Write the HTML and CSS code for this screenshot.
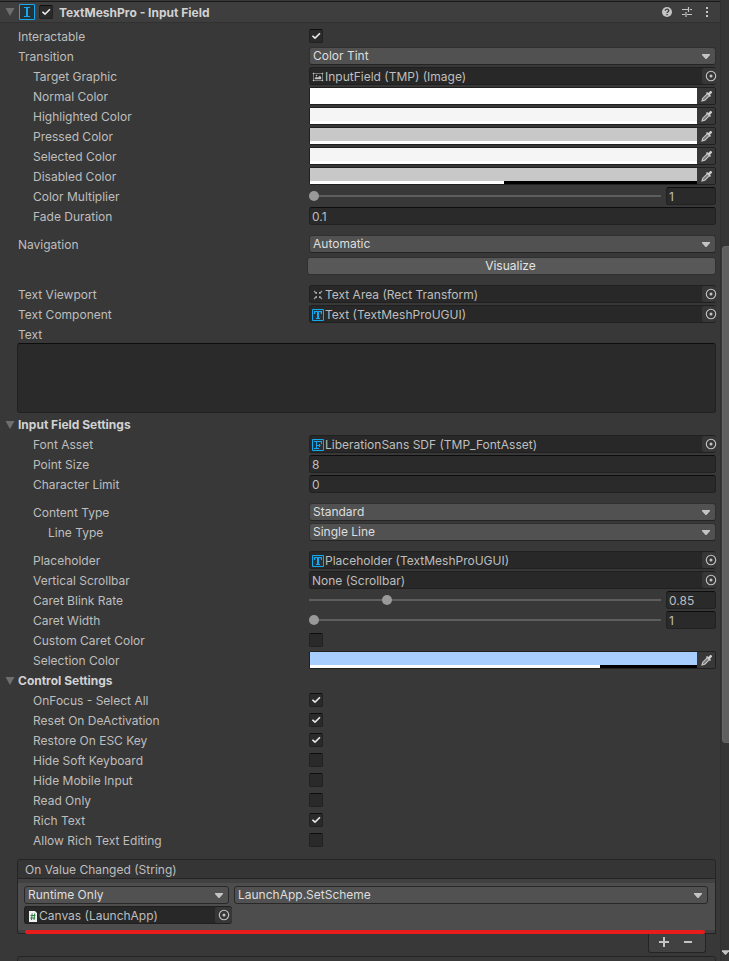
FILE: index.html
```html
<!DOCTYPE html>
<html lang="en">
<head>
<meta charset="utf-8">
<title>Inspector</title>
<link rel="stylesheet" href="styles.css">
</head>
<body>
<svg class="defs" aria-hidden="true">
  <symbol id="fold" viewBox="0 0 10 8"><path d="M0.5 0h9L5 8z" fill="#6e6e6e"/></symbol>
  <symbol id="arrow" viewBox="0 0 8 5"><path d="M0 0h8v1L4.500 5h-1L0 1z" fill="#c4c4c4"/></symbol>
  <symbol id="target" viewBox="0 0 12 12"><circle cx="6" cy="6" r="4.700" fill="none" stroke="#c4c4c4" stroke-width="1.100"/><circle cx="6" cy="6" r="1.500" fill="#c4c4c4"/></symbol>
  <symbol id="dropper" viewBox="0 0 12 12"><path d="M6.200 3.800L1.800 8.200 1 11l2.800-.8 4.400-4.400" fill="#777" stroke="#c4c4c4" stroke-width="1.200"/><path d="M5 3l1-1 1.300 1L9 1.200C10 .2 11.800 2 10.800 3L9 4.700 10 6 9 7z" fill="#d0d0d0"/></symbol>
  <symbol id="tmp-t" viewBox="0 0 12 12"><path d="M.5.5h11v11H.5z" fill="#263238" stroke="#15a8ec"/><path d="M2 2h8v3H9L8.500 3H7v6h1v1H4V9h1V3H3.500L3 5H2z" fill="#15a8ec"/></symbol>
  <symbol id="tmp-f" viewBox="0 0 12 12"><path d="M.5.5h11v11H.5z" fill="#263238" stroke="#15a8ec"/><path d="M2 2.500h8M9.500 2v3M4.500 2.500v7M2 9.500h5M4.500 6.500h4M7.500 5v3" fill="none" stroke="#15a8ec"/></symbol>
  <symbol id="image" viewBox="0 0 12 10"><path d="M1.500 1.500h9v7h-9z" fill="none" stroke="#777"/><path d="M1 1h1v1H1zM10 1h1v1h-1zM1 8h1v1H1zM10 8h1v1h-1zM3 7V6l1.500-1L6 6l1.500-2L9 5v2zM4 3h1v1H4z" fill="#c4c4c4" stroke="#c4c4c4" stroke-width=".4"/></symbol>
  <symbol id="rect" viewBox="0 0 12 12"><path d="M2 2l2.500 2.500M10 2L7.500 4.500M2 10l2.500-2.500M10 10L7.500 7.500" stroke="#999" stroke-width="1.200"/><path d="M3 4.500h2V2.800zM7 2.800v1.700h2zM3 7.500h2v1.700zM7 9.200V7.500h2z" fill="#c4c4c4"/></symbol>
</svg>
<div class="window">
<main class="inspector">
  <header class="titlebar">
    <svg class="fold"><use href="#fold"/></svg>
    <svg class="component-icon" viewBox="0 0 16 16"><path d="M.5.5h15v15H.5z" fill="#263238" stroke="#15a8ec"/><path d="M5 3h6v1H9v8h2v1H5v-1h2V4H5z" fill="#15a8ec"/></svg>
    <input type="checkbox" id="enabled" aria-label="Enabled" checked>
    <h1><label for="enabled">TextMeshPro - Input Field</label></h1>
    <button class="tool" aria-label="Help"><svg viewBox="0 0 12 12"><circle cx="6" cy="6" r="5" fill="#c4c4c4"/><path d="M4.200 4.800c0-2.300 3.600-2.300 3.600-.2 0 1.200-1.800 1.200-1.800 2.500" fill="none" stroke="#3e3e3e" stroke-width="1.300"/><path d="M5.300 8h1.400v1.300H5.300z" fill="#3e3e3e"/></svg></button>
    <button class="tool" aria-label="Presets"><svg viewBox="0 0 12 12"><path d="M1 3.500h6M9 3.500h2M1 8.500h3M6 8.500h5M7.500 1v5M5 6v5" fill="none" stroke="#c4c4c4" stroke-width="1.200"/></svg></button>
    <button class="tool" aria-label="More"><svg viewBox="0 0 12 12"><path d="M5 1h2v2H5zM5 5h2v2H5zM5 9h2v2H5z" fill="#c4c4c4"/></svg></button>
  </header>

  <form class="body">
    <div class="row"><label for="interactable">Interactable</label><input type="checkbox" id="interactable" checked></div>
    <div class="row"><label for="transition">Transition</label><div class="dropdown"><select id="transition"><option>Color Tint</option></select><svg><use href="#arrow"/></svg></div></div>
    <div class="row in1"><label for="graphic">Target Graphic</label><div class="object"><svg class="image"><use href="#image"/></svg><span>InputField (TMP) (Image)</span><button type="button" id="graphic"><svg><use href="#target"/></svg></button></div></div>
    <div class="row in1"><label for="c1">Normal Color</label><div class="color"><div class="swatch"><input type="color" id="c1" value="#ffffff"><div class="alpha"><div style="width:100%"></div></div></div><button type="button" aria-label="Pick"><svg><use href="#dropper"/></svg></button></div></div>
    <div class="row in1"><label for="c2">Highlighted Color</label><div class="color"><div class="swatch"><input type="color" id="c2" value="#f5f5f5"><div class="alpha"><div style="width:100%"></div></div></div><button type="button" aria-label="Pick"><svg><use href="#dropper"/></svg></button></div></div>
    <div class="row in1"><label for="c3">Pressed Color</label><div class="color"><div class="swatch"><input type="color" id="c3" value="#c8c8c8"><div class="alpha"><div style="width:100%"></div></div></div><button type="button" aria-label="Pick"><svg><use href="#dropper"/></svg></button></div></div>
    <div class="row in1"><label for="c4">Selected Color</label><div class="color"><div class="swatch"><input type="color" id="c4" value="#f5f5f5"><div class="alpha"><div style="width:100%"></div></div></div><button type="button" aria-label="Pick"><svg><use href="#dropper"/></svg></button></div></div>
    <div class="row in1"><label for="c5">Disabled Color</label><div class="color"><div class="swatch"><input type="color" id="c5" value="#c8c8c8"><div class="alpha"><div style="width:50%"></div></div></div><button type="button" aria-label="Pick"><svg><use href="#dropper"/></svg></button></div></div>
    <div class="row in1"><label for="mult">Color Multiplier</label><div class="slider"><input type="range" id="mult" min="1" max="5" step="0.01" value="1"><input type="text" aria-label="Color Multiplier value" value="1"></div></div>
    <div class="row in1"><label for="fade">Fade Duration</label><input type="text" id="fade" value="0.1"></div>

    <div class="row gap"><label for="nav">Navigation</label><div class="dropdown"><select id="nav"><option>Automatic</option></select><svg><use href="#arrow"/></svg></div></div>
    <div class="row visualize"><button type="button">Visualize</button></div>

    <div class="row gap"><label for="viewport">Text Viewport</label><div class="object"><svg><use href="#rect"/></svg><span>Text Area (Rect Transform)</span><button type="button" id="viewport"><svg><use href="#target"/></svg></button></div></div>
    <div class="row"><label for="component">Text Component</label><div class="object"><svg><use href="#tmp-t"/></svg><span>Text (TextMeshProUGUI)</span><button type="button" id="component"><svg><use href="#target"/></svg></button></div></div>
    <div class="row"><label for="text">Text</label></div>
    <textarea id="text"></textarea>

    <h2><svg class="fold"><use href="#fold"/></svg>Input Field Settings</h2>
    <div class="row in1"><label for="font">Font Asset</label><div class="object"><svg><use href="#tmp-f"/></svg><span>LiberationSans SDF (TMP_FontAsset)</span><button type="button" id="font"><svg><use href="#target"/></svg></button></div></div>
    <div class="row in1"><label for="size">Point Size</label><input type="text" id="size" value="8"></div>
    <div class="row in1"><label for="limit">Character Limit</label><input type="text" id="limit" value="0"></div>

    <div class="row in1 gap"><label for="content">Content Type</label><div class="dropdown"><select id="content"><option>Standard</option></select><svg><use href="#arrow"/></svg></div></div>
    <div class="row in2"><label for="line">Line Type</label><div class="dropdown"><select id="line"><option>Single Line</option></select><svg><use href="#arrow"/></svg></div></div>

    <div class="row in1 gap"><label for="placeholder">Placeholder</label><div class="object"><svg><use href="#tmp-t"/></svg><span>Placeholder (TextMeshProUGUI)</span><button type="button" id="placeholder"><svg><use href="#target"/></svg></button></div></div>
    <div class="row in1"><label for="scrollbar">Vertical Scrollbar</label><div class="object"><span>None (Scrollbar)</span><button type="button" id="scrollbar"><svg><use href="#target"/></svg></button></div></div>
    <div class="row in1"><label for="blink">Caret Blink Rate</label><div class="slider"><input type="range" id="blink" min="0" max="4" step="0.01" value="0.85"><input type="text" aria-label="Caret Blink Rate value" value="0.85"></div></div>
    <div class="row in1"><label for="caret">Caret Width</label><div class="slider"><input type="range" id="caret" min="1" max="5" value="1"><input type="text" aria-label="Caret Width value" value="1"></div></div>
    <div class="row in1"><label for="custom">Custom Caret Color</label><input type="checkbox" id="custom"></div>
    <div class="row in1"><label for="c6">Selection Color</label><div class="color"><div class="swatch"><input type="color" id="c6" value="#a8ceff"><div class="alpha"><div style="width:75%"></div></div></div><button type="button" aria-label="Pick"><svg><use href="#dropper"/></svg></button></div></div>

    <h2><svg class="fold"><use href="#fold"/></svg>Control Settings</h2>
    <div class="row in1"><label for="k1">OnFocus - Select All</label><input type="checkbox" id="k1" checked></div>
    <div class="row in1"><label for="k2">Reset On DeActivation</label><input type="checkbox" id="k2" checked></div>
    <div class="row in1"><label for="k3">Restore On ESC Key</label><input type="checkbox" id="k3" checked></div>
    <div class="row in1"><label for="k4">Hide Soft Keyboard</label><input type="checkbox" id="k4"></div>
    <div class="row in1"><label for="k5">Hide Mobile Input</label><input type="checkbox" id="k5"></div>
    <div class="row in1"><label for="k6">Read Only</label><input type="checkbox" id="k6"></div>
    <div class="row in1"><label for="k7">Rich Text</label><input type="checkbox" id="k7" checked></div>
    <div class="row in1"><label for="k8">Allow Rich Text Editing</label><input type="checkbox" id="k8"></div>

    <section class="event">
      <h3>On Value Changed (String)</h3>
      <div class="listeners">
        <div class="listener">
          <div class="dropdown"><select aria-label="Call state"><option>Runtime Only</option></select><svg><use href="#arrow"/></svg></div>
          <div class="dropdown"><select aria-label="Function"><option>LaunchApp.SetScheme</option></select><svg><use href="#arrow"/></svg></div>
          <div class="object"><svg class="script" viewBox="0 0 12 12"><path d="M2 1h6l2 2v9H2z" fill="#f2f2f2"/><path d="M5.200 3.500L4.500 10M7.700 3.500L7 10M3.500 5.500h5M3.200 8h5" stroke="#2e7d46" fill="none"/></svg><span>Canvas (LaunchApp)</span><button type="button" aria-label="Select object"><svg><use href="#target"/></svg></button></div>
        </div>
        <div class="underline"></div>
      </div>
      <div class="footer">
        <button type="button" aria-label="Add"><svg viewBox="0 0 10 10"><path d="M5 0v10M0 5h10" stroke="#c4c4c4" stroke-width="2"/></svg></button>
        <button type="button" aria-label="Remove"><svg viewBox="0 0 10 10"><path d="M1 5h8" stroke="#c4c4c4" stroke-width="2"/></svg></button>
      </div>
    </section>
    <section class="event next"></section>
  </form>
</main>
<aside class="scroll"><div class="thumb"></div><svg><use href="#arrow"/></svg></aside>
</div>
</body>
</html>
```
FILE: styles.css
```css
* { box-sizing: border-box; }

body {
  margin: 0;
  background: #383838;
  color: #bebebe;
  font: 12px/18px Inter, "Liberation Sans", sans-serif;
}

.defs { display: none; }
svg { display: block; flex: none; }
h1, h2, h3 { margin: 0; font-size: 12px; line-height: 18px; }

button, input, select, textarea {
  margin: 0;
  font: inherit;
  color: inherit;
}

button {
  display: flex;
  align-items: center;
  justify-content: center;
  padding: 0;
  border: 0;
  background: none;
}

.window {
  display: grid;
  grid-template-columns: 1fr 9px;
  height: 100vh;
  overflow: hidden;
}

.inspector { min-width: 0; overflow: hidden; }

.titlebar {
  display: flex;
  align-items: center;
  height: 22px;
  margin-top: 1px;
  padding: 0 7px 0 5px;
  border-top: 1px solid #1a1a1a;
  border-bottom: 1px solid #303030;
  background: #3e3e3e;
}

.fold { width: 10px; height: 8px; }
.component-icon { width: 16px; height: 16px; margin: 0 4px; }
.titlebar h1 { flex: 1; padding: 2px 0 0 6px; color: #d2d2d2; }
.tool { width: 12px; height: 12px; margin-left: 8px; }
.tool svg { width: 12px; height: 12px; }

.body { padding: 3px 4px 0 18px; }

.row {
  display: grid;
  grid-template-columns: 291px 1fr;
  align-items: center;
  height: 20px;
}
.row > label { padding-top: 2px; }
.in1 > label { padding-left: 15px; }
.in2 > label { padding-left: 30px; }
.gap { margin-top: 8px; }

input[type="text"], textarea {
  width: 100%;
  min-width: 0;
  height: 18px;
  padding: 1px 2px 0;
  border: 1px solid #212121;
  border-top-color: #0d0d0d;
  border-radius: 3px;
  outline: 0;
  background: #2a2a2a;
}

textarea {
  display: block;
  width: calc(100% + 1px);
  height: 70px;
  margin: -1px 0 1px -1px;
  resize: none;
}

input[type="checkbox"] {
  appearance: none;
  flex: none;
  width: 14px;
  height: 14px;
  border: 1px solid #212121;
  border-top-color: #0d0d0d;
  border-radius: 2px;
  background: #2a2a2a;
}
input[type="checkbox"]:checked::before {
  content: "";
  display: block;
  height: 12px;
  background: #e8e8e8;
  clip-path: polygon(15% 52%, 25% 43%, 42% 59%, 78% 22%, 88% 31%, 42% 78%);
}

.dropdown { display: grid; align-items: center; min-width: 0; }
.dropdown > * { grid-area: 1 / 1; }
.dropdown select {
  appearance: none;
  width: 100%;
  height: 18px;
  padding: 0 20px 0 3px;
  border: 1px solid #303030;
  border-bottom-color: #242424;
  border-radius: 3px;
  background: #515151;
  color: #dedede;
  line-height: 16px;
}
.dropdown svg {
  justify-self: end;
  width: 8px;
  height: 5px;
  margin-right: 6px;
  pointer-events: none;
}

.object {
  display: flex;
  align-items: center;
  min-width: 0;
  height: 18px;
  padding-left: 2px;
  border: 1px solid #202020;
  border-right: 0;
  border-radius: 3px;
  background: #282828;
}
.object > svg { width: 12px; height: 12px; margin: 1px 1px 0 0; }
.object > .image { height: 10px; }
.object span { flex: 1; min-width: 0; padding-top: 2px; white-space: nowrap; }
.object button {
  width: 14px;
  height: 16px;
  border-radius: 2px;
  background: #373737;
}
.object button svg { width: 12px; height: 12px; margin-left: 3px; }

.color {
  display: grid;
  grid-template-columns: 1fr 18px;
  height: 18px;
  border: 1px solid #202020;
  border-radius: 2px;
}
.color button svg { width: 12px; height: 12px; margin-left: 2px; }
.swatch { display: grid; grid-template-rows: 13px 3px; }
.swatch input {
  appearance: none;
  width: 100%;
  height: 13px;
  padding: 0;
  border: 0;
  background: none;
}
.swatch input::-webkit-color-swatch-wrapper { padding: 0; }
.swatch input::-webkit-color-swatch { border: 0; border-radius: 0; }

.alpha { height: 3px; background: #000; }
.alpha div { height: 100%; background: #fff; }

.slider {
  display: grid;
  grid-template-columns: 1fr 50px;
  column-gap: 5px;
  align-items: center;
}
.slider input[type="range"] {
  appearance: none;
  width: 100%;
  min-width: 0;
  height: 10px;
  background: linear-gradient(#5e5e5e, #5e5e5e) center / 100% 2px no-repeat;
}
.slider input[type="range"]::-webkit-slider-thumb {
  appearance: none;
  width: 10px;
  height: 10px;
  border-radius: 50%;
  background: #999;
}

.visualize { height: 22px; }
.visualize button {
  grid-column: 2;
  height: 18px;
  margin: 2px 0 0 -2px;
  padding-right: 2px;
  border: 1px solid #303030;
  border-radius: 3px;
  background: #585858;
  color: #e4e4e4;
}

h2 {
  display: flex;
  align-items: center;
  height: 20px;
  margin-left: -13px;
  padding-top: 2px;
  color: #d2d2d2;
}
h2 .fold { margin-right: 3px; }

.event { margin: 9px 0 0 -1px; }
.event h3 {
  height: 20px;
  padding: 1px 7px 0;
  border: 1px solid #242424;
  border-radius: 3px 3px 0 0;
  background: #353535;
  font-weight: 400;
}
.listeners {
  position: relative;
  padding: 4px 0 3px;
  border: 1px solid #242424;
  border-top: 0;
  border-radius: 0 0 0 3px;
  background: #414141;
}
.listener {
  display: grid;
  grid-template-columns: 206px 1fr;
  grid-template-rows: 18px 18px;
  gap: 2px 4px;
  padding: 3px 7px 6px 6px;
  background: #4d4d4d;
}
.listener .dropdown:first-child { margin-right: 1px; }
.listener select { border-color: #282828; }
.listener .object { width: 208px; }
.listener .object > svg { margin-right: 0; }
.listener .object button { width: 17px; }
.listener .object button svg { margin: 0; }
.underline {
  position: absolute;
  left: 7px;
  right: 10px;
  bottom: -1px;
  height: 4px;
  border-radius: 2px;
  background: #e81c1c;
}
.footer {
  display: flex;
  align-items: center;
  justify-content: space-around;
  width: 58px;
  height: 19px;
  margin: 0 10px 0 auto;
  padding: 0 5px 2px 3px;
  border: 1px solid #242424;
  border-top: 0;
  border-radius: 0 0 3px 3px;
  background: #414141;
}
.footer svg { width: 10px; height: 10px; }
.next {
  height: 20px;
  margin-top: 3px;
  border: 1px solid #242424;
  border-radius: 3px 3px 0 0;
}

.scroll {
  display: flex;
  flex-direction: column;
  align-items: flex-end;
  height: 100vh;
  padding-bottom: 6px;
  border-left: 1px solid #303030;
  background: #353535;
}
.thumb {
  width: 7px;
  height: 52%;
  margin-top: 246px;
  border: 1px solid #686868;
  border-right: 0;
  border-radius: 4px 0 0 4px;
  background: #5f5f5f;
}
.scroll svg { width: 7px; height: 5px; margin-top: auto; }
```
